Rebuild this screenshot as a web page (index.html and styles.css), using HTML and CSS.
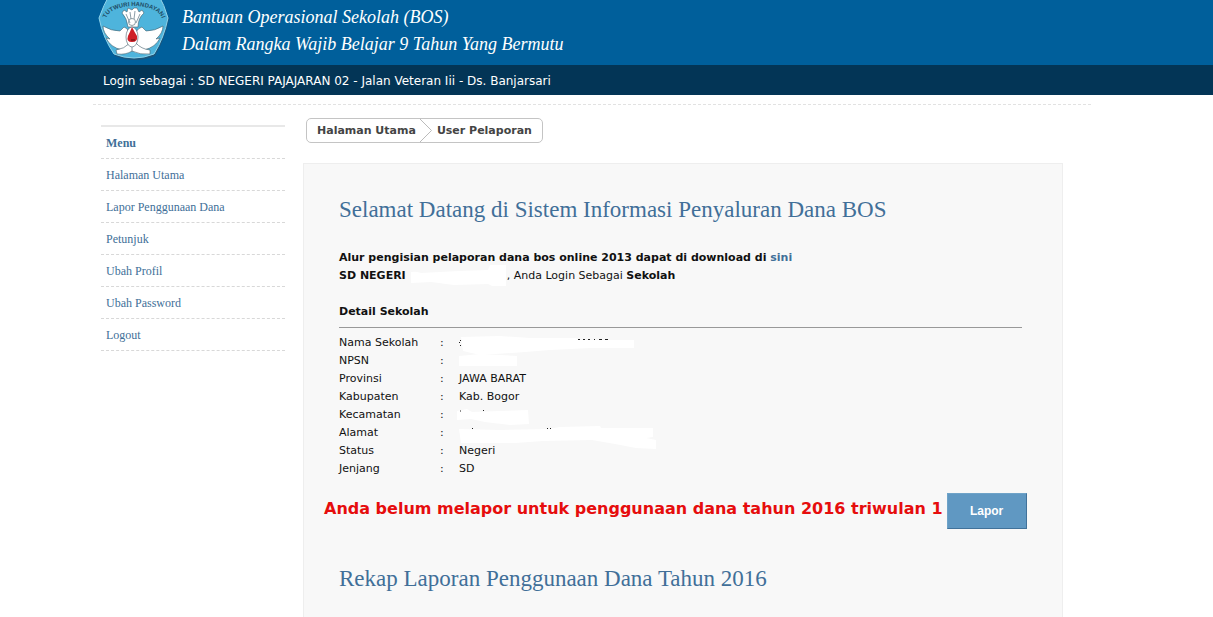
FILE: index.html
```html
<!DOCTYPE html>
<html lang="id">
<head>
<meta charset="utf-8">
<title>Sistem Informasi Penyaluran Dana BOS</title>
<link rel="stylesheet" href="styles.css">
</head>
<body>
<header class="banner">
  <svg class="logo" viewBox="0 0 72 60" role="img" aria-label="Tut Wuri Handayani">
    <path d="M13 -8 Q36 -20 59 -8 Q67 6 70 18 Q66 38 56 55 Q36 63 16 55 Q5 38 1 18 Q5 6 13 -8Z" fill="#3a4c5c" opacity=".5" transform="translate(1 1)"/>
    <path d="M13 -8 Q36 -20 59 -8 Q67 6 70 18 Q66 38 56 54 Q36 62 16 54 Q5 38 1 18 Q5 6 13 -8Z" fill="#4eb4dc" stroke="#8fd3ea"/>
    <path id="arc" d="M8 20 A28 14 0 0 1 64 20" fill="none"/>
    <text class="logo-text"><textPath href="#arc" startOffset="50%" text-anchor="middle">TUTWURI HANDAYANI</textPath></text>
    <g fill="#fff" stroke="#46606c" stroke-width=".6">
      <path d="M5 26 Q13 31 22 31 L26 27 Q32 29 32 39 Q32 47 24 50 Q12 47 8 38 L12 39 Q5 33 5 26Z"/>
      <path d="M65 26 Q57 31 48 31 L44 27 Q37 29 37 39 Q38 47 46 50 Q58 47 62 38 L58 39 Q65 33 65 26Z"/>
      <path d="M30 27 Q29 18 24 13 L26 10 L29 12 L30 8 L34 10 L36 8 L39 8 L41 12 L44 10 L46 13 Q40 18 40 27Z"/>
      <path d="M32 43 Q26 49 18 50 L19 54 Q28 55 34 51 Q42 55 52 54 L52 50 Q43 49 38 43Z"/>
      <ellipse cx="34" cy="37" rx="6" ry="10"/>
      <circle cx="34" cy="22" r="3.500"/>
    </g>
    <path d="M32 12 L33 19 M37 11 L36 19 M28 14 L32 23 M42 14 L38 23 M34 47 V52" fill="none" stroke="#6e8490" stroke-width=".8"/>
    <path d="M34 27 Q32 32 30 36 Q28 42 34 42 Q40 42 39 36 Q37 33 34 27Z" fill="#cf2027"/>
    <path d="M33 40 H37" stroke="#5d1111"/>
  </svg>
  <div class="banner-title">Bantuan Operasional Sekolah (BOS)<br>Dalam Rangka Wajib Belajar 9 Tahun Yang Bermutu</div>
</header>
<div class="login-bar">Login sebagai : SD NEGERI PAJAJARAN 02 - Jalan Veteran Iii - Ds. Banjarsari</div>
<div class="page">
  <nav class="menu">
    <h2 class="menu-title">Menu</h2>
    <a class="menu-link" href="#">Halaman Utama</a>
    <a class="menu-link" href="#">Lapor Penggunaan Dana</a>
    <a class="menu-link" href="#">Petunjuk</a>
    <a class="menu-link" href="#">Ubah Profil</a>
    <a class="menu-link" href="#">Ubah Password</a>
    <a class="menu-link" href="#">Logout</a>
  </nav>
  <main class="content">
    <nav class="crumbs" aria-label="Breadcrumb">
      <a class="crumb" href="#">Halaman Utama</a>
      <svg class="crumb-arrow" viewBox="0 0 12 23" aria-hidden="true"><path d="M0 0 L11.500 11.500 L0 23" fill="none" stroke="#bbb"/></svg>
      <a class="crumb" href="#">User Pelaporan</a>
    </nav>
    <section class="panel">
      <h1 class="heading">Selamat Datang di Sistem Informasi Penyaluran Dana BOS</h1>
      <div class="intro">
        <b>Alur pengisian pelaporan dana bos online 2013 dapat di download di <a class="link" href="#">sini</a></b><br>
        <b>SD NEGERI</b><svg class="name-mask" viewBox="412 265 96 23" aria-hidden="true"><path d="M412 272 Q417 271 422 273 L460 271 L489 270 L491 265 H507 V286 H493 L489 284 L455 285 L432 282 L412 283Z" fill="#fff"/></svg>, Anda Login Sebagai <b>Sekolah</b>
      </div>
      <h3 class="detail-title">Detail Sekolah</h3>
      <hr class="rule">
      <div class="detail">
        <table class="facts">
          <tr><th scope="row">Nama Sekolah</th><td>:</td><td></td></tr>
          <tr><th scope="row">NPSN</th><td>:</td><td></td></tr>
          <tr><th scope="row">Provinsi</th><td>:</td><td>JAWA BARAT</td></tr>
          <tr><th scope="row">Kabupaten</th><td>:</td><td>Kab. Bogor</td></tr>
          <tr><th scope="row">Kecamatan</th><td>:</td><td></td></tr>
          <tr><th scope="row">Alamat</th><td>:</td><td></td></tr>
          <tr><th scope="row">Status</th><td>:</td><td>Negeri</td></tr>
          <tr><th scope="row">Jenjang</th><td>:</td><td>SD</td></tr>
        </table>
        <svg class="masks" viewBox="455 334 203 144" aria-hidden="true">
          <g fill="#fff">
            <path d="M461 337 L500 336 L530 338 L576 338 L579 340 L634 340 V348 L590 348 L550 350 L525 352 L480 355 L463 351Z"/>
            <path d="M459 356 L480 354 L517 356 V366 H459Z"/>
            <path d="M457 411 L467 409 L472 412 L500 411 L528 410 L529 424 L510 425 L485 422 L471 419 L457 420Z"/>
            <path d="M459 429 L500 430 L548 429 L560 427 L600 426 L601 428 L653 428 V437 L646 438 L656 440 V449 L636 448 L615 444 L592 440 L543 441 L515 443 H461Z"/>
          </g>
          <path d="M460 340.500 h1 M459 342.500 h1 M460 345.500 h1 M578 339.500 h2 M583 339.500 h2 M588 339.500 h2 M594 339.500 h1 M599 339.500 h3 M605 339.500 h3 M460 411 h1 M483 410.500 h1 M472 428.500 h1 M547 428.500 h1 M550 428.500 h1" stroke="#222" fill="none"/>
        </svg>
      </div>
      <div class="notice">
        <span class="notice-text">Anda belum melapor untuk penggunaan dana tahun 2016 triwulan 1</span>
        <button class="report-button" type="button">Lapor</button>
      </div>
      <h2 class="heading">Rekap Laporan Penggunaan Dana Tahun 2016</h2>
    </section>
  </main>
</div>
</body>
</html>
```
FILE: styles.css
```css
* { box-sizing: border-box; }
body {
  margin: 0;
  background: #fff;
  color: #111;
  font: 11px/18px Verdana, "DejaVu Sans", sans-serif;
}
.banner {
  display: flex;
  gap: 12px;
  height: 65px;
  padding-left: 98px;
  background: #005f9b;
  color: #fff;
}
.logo { width: 72px; height: 60px; }
.logo-text { font: bold 6px "Liberation Sans", sans-serif; fill: #1f4d66; }
.banner-title {
  padding-top: 4px;
  font: italic 18px/27px Georgia, "Liberation Serif", serif;
}
.login-bar {
  padding: 7px 103px 5px;
  background: #033556;
  color: #fff;
  font-size: 12px;
}
.page {
  display: flex;
  align-items: flex-start;
  gap: 18px;
  margin: 9px 122px 0 93px;
  padding: 13px 28px 0 8px;
  border-top: 1px dashed #e2e2e2;
}
.menu {
  flex: 0 0 184px;
  margin-top: 7px;
  border-top: 2px solid #e8e8e8;
  font: 12px/18px Georgia, "Liberation Serif", serif;
}
.menu-title, .menu-link {
  display: block;
  margin: 0;
  padding: 7px 5px 6px;
  border-bottom: 1px dashed #d8d8d8;
  color: #416f98;
  font-size: 12px;
  text-decoration: none;
}
.content { flex: 1; min-width: 0; }
.crumbs {
  display: flex;
  width: fit-content;
  height: 25px;
  margin-left: 3px;
  border: 1px solid #c4c4c4;
  border-radius: 5px;
}
.crumb {
  padding: 0 4px 0 10px;
  color: #444;
  font-weight: bold;
  line-height: 24px;
  text-decoration: none;
}
.crumb:last-child { padding: 0 10px 0 5px; }
.crumb-arrow { width: 12px; height: 23px; }
.panel {
  margin-top: 20px;
  padding: 31px 40px 40px 35px;
  border: 1px solid #eee;
  background: #f8f8f8;
}
.heading {
  margin: 0;
  color: #416f98;
  font: 23px/30px Georgia, "Liberation Serif", serif;
}
.intro { margin-top: 24px; }
.link { color: #416f98; text-decoration: none; }
.name-mask {
  width: 96px;
  height: 23px;
  margin: -5px 0 -5px 5px;
  vertical-align: middle;
}
.detail-title { margin: 18px 0 6px; font-size: 11px; }
.rule { margin: 0 0 6px; border: 0; border-top: 1px solid #999; }
.detail { position: relative; }
.facts { border-collapse: collapse; }
.facts th { width: 101px; padding: 0; font-weight: normal; text-align: left; }
.facts td { min-width: 19px; height: 18px; padding: 0 14px 0 0; }
.masks {
  position: absolute;
  top: 0;
  left: 116px;
  width: 203px;
  height: 144px;
}
.notice {
  display: flex;
  align-items: flex-start;
  gap: 4px;
  margin: 15px 0 35px -15px;
}
.notice-text {
  color: #e60d0d;
  font-size: 16px;
  font-weight: bold;
  line-height: 32px;
  white-space: nowrap;
}
.report-button {
  flex: 0 0 80px;
  height: 36px;
  border: 1px solid;
  border-color: #6fa3c8 #41729a #41729a #6fa3c8;
  background: #6098c2;
  color: #fff;
  font: bold 12px "Liberation Sans", sans-serif;
}
```
